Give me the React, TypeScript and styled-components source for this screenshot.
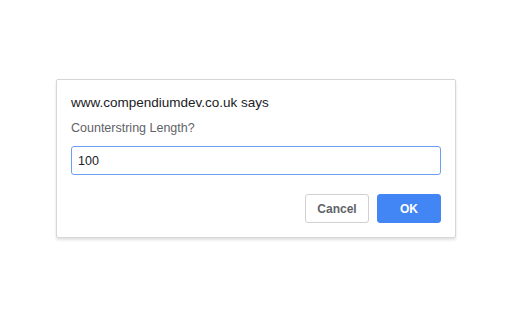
import * as React from 'react';
import styled, { createGlobalStyle } from 'styled-components';

const GlobalStyle = createGlobalStyle`
	html, body {
		margin: 0;
		padding: 0;
		background: #ffffff;
	}
	body {
		font-family: "Liberation Sans", Arial, sans-serif;
	}
`;

//Page behind the dialog
const Page = styled.div`
	width: 512px;
	height: 320px;
	box-sizing: border-box;
	padding: 79px 0 0 56px;
	background: #ffffff;
	overflow: hidden;
`;

//Dialog box
const Dialog = styled.div`
	width: 400px;
	height: 159px;
	box-sizing: border-box;
	padding: 14px 14px 14px 14px;
	background: #ffffff;
	border: 1px solid #d6d6d6;
	border-radius: 2px;
	box-shadow: 0 2px 3px rgba(0, 0, 0, 0.12);
	display: flex;
	flex-direction: column;
`;

const Title = styled.div`
	font-size: 13.5px;
	line-height: 17px;
	color: #202124;
`;

const Label = styled.div`
	margin-top: 10px;
	font-size: 12.5px;
	line-height: 15px;
	color: #5f6368;
`;

const Input = styled.input`
	margin-top: 10px;
	height: 29px;
	box-sizing: border-box;
	padding: 0 6px;
	border: 1px solid #6a9ff2;
	border-radius: 3px;
	font-family: "Liberation Sans", Arial, sans-serif;
	font-size: 12.5px;
	color: #202124;
	outline: none;
`;

const Actions = styled.div`
	margin-top: auto;
	display: flex;
	justify-content: flex-end;
	gap: 8px;
`;

interface ButtonProps {
	$primary?: boolean;
}

const Button = styled.button<ButtonProps>`
	width: 64px;
	height: 29px;
	box-sizing: border-box;
	border-radius: 3px;
	font-family: "Liberation Sans", Arial, sans-serif;
	font-size: 12px;
	font-weight: bold;
	padding: 0;
	cursor: pointer;
	border: 1px solid ${p => (p.$primary ? '#4285f4' : '#d0d0d0')};
	background: ${p => (p.$primary ? '#4285f4' : '#ffffff')};
	color: ${p => (p.$primary ? '#ffffff' : '#5f6368')};
`;

export default function App() {
	return (
		<>
			<GlobalStyle />
			<Page>
				<Dialog>
					<Title>www.compendiumdev.co.uk says</Title>
					<Label>Counterstring Length?</Label>
					<Input defaultValue="100" />
					<Actions>
						<Button>Cancel</Button>
						<Button $primary>OK</Button>
					</Actions>
				</Dialog>
			</Page>
		</>
	);
}
